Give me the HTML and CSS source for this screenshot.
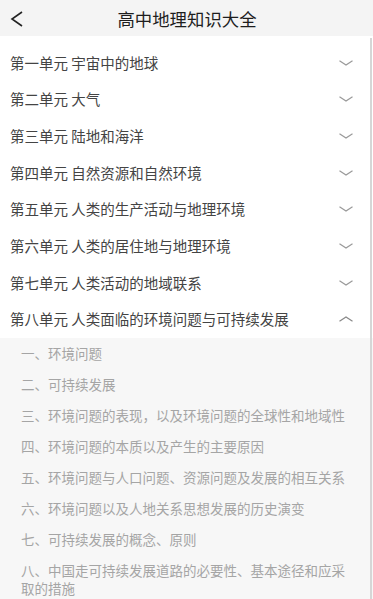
FILE: index.html
```html
<!DOCTYPE html>
<html lang="zh-CN">
<head>
    <meta charset="UTF-8">
    <meta name="viewport" content="width=device-width, initial-scale=1.0">
    <title>高中地理知识大全</title>
    <link rel="stylesheet" href="styles.css">
</head>
<body>

<div class="header">
    <div class="back">
        <svg width="14" height="18" viewBox="0 0 14 18"><polyline points="12,2 2,9 12,16" fill="none" stroke="#222" stroke-width="1.6"/></svg>
    </div>
    <div class="title">高中地理知识大全</div>
</div>

<div class="units">
    <div class="unit">
        <span>第一单元 宇宙中的地球</span>
        <svg class="arrow" width="14" height="6" viewBox="0 0 14 6"><polyline points="0.5,0.8 7,5 13.5,0.8" fill="none" stroke="#999" stroke-width="1.2"/></svg>
    </div>
    <div class="unit">
        <span>第二单元 大气</span>
        <svg class="arrow" width="14" height="6" viewBox="0 0 14 6"><polyline points="0.5,0.8 7,5 13.5,0.8" fill="none" stroke="#999" stroke-width="1.2"/></svg>
    </div>
    <div class="unit">
        <span>第三单元 陆地和海洋</span>
        <svg class="arrow" width="14" height="6" viewBox="0 0 14 6"><polyline points="0.5,0.8 7,5 13.5,0.8" fill="none" stroke="#999" stroke-width="1.2"/></svg>
    </div>
    <div class="unit">
        <span>第四单元 自然资源和自然环境</span>
        <svg class="arrow" width="14" height="6" viewBox="0 0 14 6"><polyline points="0.5,0.8 7,5 13.5,0.8" fill="none" stroke="#999" stroke-width="1.2"/></svg>
    </div>
    <div class="unit">
        <span>第五单元 人类的生产活动与地理环境</span>
        <svg class="arrow" width="14" height="6" viewBox="0 0 14 6"><polyline points="0.5,0.8 7,5 13.5,0.8" fill="none" stroke="#999" stroke-width="1.2"/></svg>
    </div>
    <div class="unit">
        <span>第六单元 人类的居住地与地理环境</span>
        <svg class="arrow" width="14" height="6" viewBox="0 0 14 6"><polyline points="0.5,0.8 7,5 13.5,0.8" fill="none" stroke="#999" stroke-width="1.2"/></svg>
    </div>
    <div class="unit">
        <span>第七单元 人类活动的地域联系</span>
        <svg class="arrow" width="14" height="6" viewBox="0 0 14 6"><polyline points="0.5,0.8 7,5 13.5,0.8" fill="none" stroke="#999" stroke-width="1.2"/></svg>
    </div>
    <div class="unit open">
        <span>第八单元 人类面临的环境问题与可持续发展</span>
        <svg class="arrow" width="14" height="6" viewBox="0 0 14 6"><polyline points="0.5,5.2 7,1 13.5,5.2" fill="none" stroke="#888" stroke-width="1.2"/></svg>
    </div>

    <!-- expanded chapters -->
    <div class="chapters">
        <div class="chapter">一、环境问题</div>
        <div class="chapter">二、可持续发展</div>
        <div class="chapter">三、环境问题的表现，以及环境问题的全球性和地域性</div>
        <div class="chapter">四、环境问题的本质以及产生的主要原因</div>
        <div class="chapter">五、环境问题与人口问题、资源问题及发展的相互关系</div>
        <div class="chapter">六、环境问题以及人地关系思想发展的历史演变</div>
        <div class="chapter">七、可持续发展的概念、原则</div>
        <div class="chapter">八、中国走可持续发展道路的必要性、基本途径和应采取的措施</div>
    </div>
</div>

<div class="scrollbar"></div>

</body>
</html>
```

FILE: styles.css
```css
body {
    margin: 0;
    padding: 0;
    background-color: #fff;
    font-family: "Noto Sans CJK SC", "Noto Sans", sans-serif;
    color: #444;
}

.header {
    display: flex;
    align-items: center;
    height: 36px;
    background-color: #f4f4f4;
}

.back {
    display: flex;
    align-items: center;
    padding-left: 10px;
    padding-top: 1px;
}

.title {
    flex: 1;
    text-align: center;
    font-size: 17.4px;
    color: #1e1e1e;
    margin-right: 24px;
    padding-left: 1px;
}

.units {
    padding-top: 8px;
}

.unit {
    display: flex;
    align-items: center;
    justify-content: space-between;
    height: 36.67px;
    padding: 0 20px 0 10px;
    font-size: 14.5px;
    color: #444;
}

.unit .arrow {
    flex-shrink: 0;
    margin-top: 1px;
}

.chapters {
    margin-top: 1px;
    background-color: #f7f7f7;
    padding-bottom: 10px;
}

.chapter {
    padding: 6.2px 20px 6.8px 21px;
    font-size: 13.5px;
    line-height: 18px;
    color: #a5a5a5;
}

.scrollbar {
    position: fixed;
    top: 38px;
    bottom: 0;
    right: 1px;
    width: 2px;
    background-color: #d6d6d6;
}
```
